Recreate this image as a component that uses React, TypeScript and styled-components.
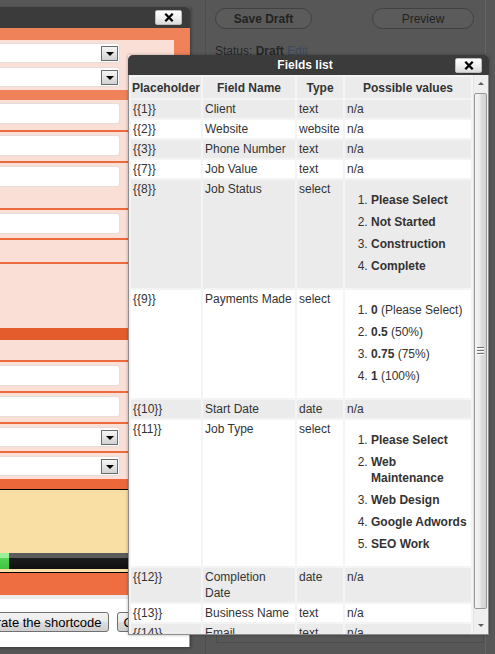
import React from "react"
import styled, { createGlobalStyle } from "styled-components"

const GlobalStyle = createGlobalStyle`
  html, body { margin: 0; padding: 0; }
  body {
    background: #575757;
    font-family: "Liberation Sans", Arial, sans-serif;
    font-size: 12px;
    color: #333;
  }
`

const Page = styled.div`
  position: relative;
  width: 495px;
  height: 654px;
  overflow: hidden;
  background: #575757;
  display: flex;
  padding-left: 205px;
  box-sizing: border-box;
`

/* ---- dimmed sidebar behind the modals ---- */
const Sidebar = styled.div`
  width: 281px;
  display: flex;
  flex-direction: column;
  border-left: 1px solid #4e4e4e;
  border-right: 1px solid #646464;
  padding-top: 8px;
  box-sizing: border-box;
`
const PillRow = styled.div`
  display: flex;
  justify-content: space-between;
  margin: 0 11px 0 9px;
`
const Pill = styled.div<{ $w: number; $bold?: boolean }>`
  width: ${p => p.$w}px;
  height: 21px;
  box-sizing: border-box;
  border: 1px solid #414141;
  border-radius: 11px;
  background: #5b5b5b;
  display: flex;
  align-items: center;
  justify-content: center;
  font-size: 12px;
  font-weight: ${p => (p.$bold ? "bold" : "normal")};
  color: #222;
`
const Status = styled.div`
  margin: 14px 0 0 9px;
  line-height: 16px;
  color: #262626;
  b { font-weight: bold; }
  span { color: #3a4a5d; }
`
const InnerBox = styled.div`
  flex: 1;
  margin: 12px 1px 11px 10px;
  border: 1px solid #4c4c4c;
`

/* ---- shared window chrome ---- */
const TitleBar = styled.div<{ $h: number; $pad: number }>`
  height: ${p => p.$h}px;
  background: #3b3b3b;
  border-radius: 5px 5px 0 0;
  display: grid;
  grid-template-columns: 1fr auto 1fr;
  align-items: center;
  padding-right: ${p => p.$pad}px;
  flex-shrink: 0;
`
const TitleText = styled.span`
  grid-column: 2;
  color: #fff;
  font-weight: bold;
  font-size: 12px;
  text-shadow: 0 0 1px rgba(0, 0, 0, 0.6);
`
const CloseButton = styled.button`
  grid-column: 3;
  justify-self: end;
  width: 27px;
  height: 15px;
  padding: 0;
  border: 1px solid #bdbdbd;
  border-radius: 2px;
  background: linear-gradient(#ffffff, #f0f0f0 50%, #dcdcdc);
  display: flex;
  align-items: center;
  justify-content: center;
`
const CloseIcon = () => (
  <svg width="10" height="9" viewBox="0 0 10 9">
    <path d="M1.3 0.8l7.4 7.4M8.7 0.8l-7.4 7.4" stroke="#000" strokeWidth="2.3" />
  </svg>
)

/* ---- left (form) window ---- */
const LeftWindow = styled.div`
  position: absolute;
  left: -210px;
  top: 7px;
  width: 400px;
  height: 640px;
  display: flex;
  flex-direction: column;
  box-shadow: 1px 1px 3px rgba(0, 0, 0, 0.35);
`
const LeftBody = styled.div`
  flex: 1;
  background: #f08259;
  border-right: 1px solid #9a9a9a;
  padding-top: 12px;
  display: flex;
  flex-direction: column;
`
const FormPanel = styled.div`
  margin-right: 15px;
  background: #f9dfd6;
  display: flex;
  flex-direction: column;
`
const Row = styled.div<{ $h: number; $line?: boolean }>`
  height: ${p => p.$h}px;
  box-sizing: border-box;
  border-top: ${p => (p.$line ? "2px solid #eb6a3e" : "none")};
  padding: 3px 54px 0 0;
`
const Band = styled.div<{ $h: number; $c: string }>`
  height: ${p => p.$h}px;
  background: ${p => p.$c};
  flex-shrink: 0;
`
const TextBox = styled.div`
  height: 21px;
  box-sizing: border-box;
  background: #fff;
  border: 1px solid #e6dcd8;
  border-radius: 3px;
`
const SelectBox = styled(TextBox)`
  height: 20px;
  display: flex;
  align-items: center;
  justify-content: flex-end;
  padding-right: 1px;
`
const DropButton = styled.div`
  width: 17px;
  height: 15px;
  box-sizing: border-box;
  border: 1px solid #6b6b6b;
  background: linear-gradient(#f6f6f6, #d2d2d2);
  display: flex;
  align-items: center;
  justify-content: center;

  &::after {
    content: "";
    border-left: 4px solid transparent;
    border-right: 4px solid transparent;
    border-top: 4px solid #000;
    margin-top: 2px;
  }
`
const Upload = styled.div`
  border-top: 1px solid #000;
  border-bottom: 1px solid #000;
  background: #f9dfa3;
  padding: 63px 0 3px;
`
const Progress = styled.div`
  height: 16px;
  background: linear-gradient(#5c5c5c 0 5px, #1c1c1c 5px, #101010);
  display: flex;
`
const ProgressFill = styled.div<{ $w: number }>`
  width: ${p => p.$w}px;
  background: linear-gradient(#9af09a 0 5px, #55d455 5px, #3fc33f);
`
const Actions = styled.div`
  flex: 1;
  background: #fff;
  display: flex;
  justify-content: flex-end;
  align-items: flex-start;
  gap: 8px;
  padding: 13px 18px 0 0;
`
const FormButton = styled.button`
  height: 20px;
  padding: 0 6px;
  border: 1px solid #707070;
  border-radius: 3px;
  background: linear-gradient(#f3f3f3, #ebebeb 50%, #dddddd 50%, #cfcfcf);
  font-family: "Liberation Sans", Arial, sans-serif;
  font-size: 13px;
  color: #000;
  white-space: nowrap;
`

/* ---- fields list window ---- */
const FieldsWindow = styled.div`
  position: absolute;
  left: 128px;
  top: 55px;
  width: 361px;
  height: 580px;
  display: flex;
  flex-direction: column;
  box-shadow: 0 0 3px rgba(0, 0, 0, 0.3);
`
const FieldsBody = styled.div`
  flex: 1;
  display: flex;
  min-height: 0;
  border: 1px solid #8d8d8d;
  border-top: none;
  background: #f4f4f4;
`
const TableView = styled.div`
  width: 344px;
  overflow: hidden;
`
const Table = styled.table`
  width: 344px;
  table-layout: fixed;
  border-collapse: separate;
  border-spacing: 2px;
  font-size: 12px;
  color: #333;
`
const Col = styled.col<{ $w: number }>`
  width: ${p => p.$w}px;
`
const Th = styled.th`
  background: #ebebeb;
  font-weight: bold;
  line-height: 16px;
  padding: 3px 1px 2px;
  text-align: center;
  white-space: nowrap;
`
const Td = styled.td<{ $alt: boolean }>`
  background: ${p => (p.$alt ? "#ffffff" : "#ebebeb")};
  line-height: 16px;
  padding: 1px 2px;
  vertical-align: top;
  text-align: left;
`
const ValueList = styled.ol`
  margin: 8px 0 10px;
  padding-left: 24px;
`
const ValueItem = styled.li`
  padding: 3px 0;
  line-height: 16px;
  b { font-weight: bold; }
`

const ScrollBar = styled.div`
  width: 15px;
  display: flex;
  flex-direction: column;
  background: #efefef;
  border-left: 1px solid #e4e4e4;
  box-sizing: border-box;
`
const Arrow = styled.div<{ $down?: boolean }>`
  height: 17px;
  display: flex;
  align-items: center;
  justify-content: center;
  flex-shrink: 0;

  &::after {
    content: "";
    border-left: 3px solid transparent;
    border-right: 3px solid transparent;
    ${p => (p.$down ? "border-top: 3px solid #5e5e5e;" : "border-bottom: 3px solid #5e5e5e;")}
  }
`
const Thumb = styled.div`
  height: 516px;
  margin: 1px 1px 0 0;
  box-sizing: border-box;
  border: 1px solid #979797;
  border-radius: 2px;
  background: linear-gradient(to right, #f6f6f6, #ebebeb 45%, #dddddd 55%, #d3d3d3);
  display: flex;
  align-items: center;
  justify-content: center;
`
const Grip = styled.div`
  width: 7px;
  height: 8px;
  background: repeating-linear-gradient(#707070 0 1px, #fbfbfb 1px 2px, transparent 2px 3px);
`
const Spacer = styled.div`
  flex: 1;
`

type Field = { ph: string; name: string; type: string; options?: [string, string?][] }

const fields: Field[] = [
  { ph: "{{1}}", name: "Client", type: "text" },
  { ph: "{{2}}", name: "Website", type: "website" },
  { ph: "{{3}}", name: "Phone Number", type: "text" },
  { ph: "{{7}}", name: "Job Value", type: "text" },
  {
    ph: "{{8}}", name: "Job Status", type: "select",
    options: [["Please Select"], ["Not Started"], ["Construction"], ["Complete"]],
  },
  {
    ph: "{{9}}", name: "Payments Made", type: "select",
    options: [["0", "(Please Select)"], ["0.5", "(50%)"], ["0.75", "(75%)"], ["1", "(100%)"]],
  },
  { ph: "{{10}}", name: "Start Date", type: "date" },
  {
    ph: "{{11}}", name: "Job Type", type: "select",
    options: [["Please Select"], ["Web Maintenance"], ["Web Design"], ["Google Adwords"], ["SEO Work"]],
  },
  { ph: "{{12}}", name: "Completion Date", type: "date" },
  { ph: "{{13}}", name: "Business Name", type: "text" },
  { ph: "{{14}}", name: "Email", type: "text" },
  { ph: "{{15}}", name: "Address", type: "text" },
]

type FormRow = { h: number; line?: boolean; field?: "input" | "select"; band?: string }

const formRows: FormRow[] = [
  { h: 24, field: "select" },
  { h: 26, field: "select" },
  { h: 10, band: "#f08259" },
  { h: 30, field: "input" },
  { h: 31, line: true, field: "input" },
  { h: 47, line: true, field: "input" },
  { h: 30, line: true, field: "input" },
  { h: 24, line: true },
  { h: 66, line: true },
  { h: 12, band: "#e55c2c" },
  { h: 20 },
  { h: 31, line: true, field: "input" },
  { h: 31, line: true, field: "input" },
  { h: 29, line: true, field: "select" },
  { h: 28, line: true, field: "select" },
]

export default function App() {
  return (
    <>
      <GlobalStyle />
      <Page>
        <Sidebar>
          <PillRow>
            <Pill $w={97} $bold>Save Draft</Pill>
            <Pill $w={102}>Preview</Pill>
          </PillRow>
          <Status>
            Status: <b>Draft</b> <span>Edit</span>
          </Status>
          <InnerBox />
        </Sidebar>

        <LeftWindow>
          <TitleBar $h={21} $pad={8}>
            <CloseButton><CloseIcon /></CloseButton>
          </TitleBar>
          <LeftBody>
            <FormPanel>
              {formRows.map((r, i) =>
                r.band ? (
                  <Band key={i} $h={r.h} $c={r.band} />
                ) : (
                  <Row key={i} $h={r.h} $line={r.line}>
                    {r.field === "input" && <TextBox />}
                    {r.field === "select" && (
                      <SelectBox><DropButton /></SelectBox>
                    )}
                  </Row>
                )
              )}
            </FormPanel>
            <Band $h={10} $c="#ec683b" />
            <Upload>
              <Progress><ProgressFill $w={219} /></Progress>
            </Upload>
            <Band $h={22} $c="#ee6e42" />
            <Band $h={4} $c="#ececec" />
            <Actions>
              <FormButton>Generate the shortcode</FormButton>
              <FormButton>Cancel</FormButton>
            </Actions>
          </LeftBody>
        </LeftWindow>

        <FieldsWindow>
          <TitleBar $h={20} $pad={7}>
            <TitleText>Fields list</TitleText>
            <CloseButton><CloseIcon /></CloseButton>
          </TitleBar>
          <FieldsBody>
            <TableView>
              <Table>
                <colgroup>
                  <Col $w={70} />
                  <Col $w={92} />
                  <Col $w={46} />
                  <Col $w={126} />
                </colgroup>
                <thead>
                  <tr>
                    <Th>Placeholder</Th>
                    <Th>Field Name</Th>
                    <Th>Type</Th>
                    <Th>Possible values</Th>
                  </tr>
                </thead>
                <tbody>
                  {fields.map((f, i) => (
                    <tr key={f.ph}>
                      <Td $alt={i % 2 === 1}>{f.ph}</Td>
                      <Td $alt={i % 2 === 1}>{f.name}</Td>
                      <Td $alt={i % 2 === 1}>{f.type}</Td>
                      <Td $alt={i % 2 === 1}>
                        {f.options ? (
                          <ValueList>
                            {f.options.map(([strong, rest]) => (
                              <ValueItem key={strong}>
                                <b>{strong}</b>
                                {rest ? ` ${rest}` : null}
                              </ValueItem>
                            ))}
                          </ValueList>
                        ) : (
                          "n/a"
                        )}
                      </Td>
                    </tr>
                  ))}
                </tbody>
              </Table>
            </TableView>
            <ScrollBar>
              <Arrow />
              <Thumb><Grip /></Thumb>
              <Spacer />
              <Arrow $down />
            </ScrollBar>
          </FieldsBody>
        </FieldsWindow>
      </Page>
    </>
  )
}
